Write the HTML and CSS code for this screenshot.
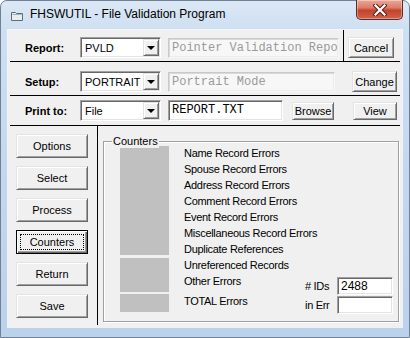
FILE: index.html
```html
<!DOCTYPE html>
<html lang="en">
<head>
    <meta charset="UTF-8">
    <title>FHSWUTIL - File Validation Program</title>
    <link rel="stylesheet" href="styles.css">
</head>
<body>
    <div class="window">
        <div class="titlebar">
            <svg class="app-icon" width="12" height="10" viewBox="0 0 12 10">
                <path d="M0.5 1.5 H4.5 L5.5 2.5 H11.5 V9.5 H0.5 Z" fill="#e6eef2" stroke="#5d6d78"/>
                <path d="M1.5 3.5 H10.5" stroke="#9fb2bd"/>
            </svg>
            <span class="title">FHSWUTIL - File Validation Program</span>
            <div class="close-btn">
                <svg width="14" height="12" viewBox="0 0 14 12">
                    <path d="M2.5 1.5 L11.5 10.5 M11.5 1.5 L2.5 10.5" stroke="#5a1e16" stroke-width="4.2" stroke-linecap="square"/>
                    <path d="M2.5 1.5 L11.5 10.5 M11.5 1.5 L2.5 10.5" stroke="#ffffff" stroke-width="2.2" stroke-linecap="square"/>
                </svg>
            </div>
        </div>

        <div class="client">
            <div class="top-rows">
                <div class="row row-report">
                    <span class="field-label">Report:</span>
                    <div class="combo"><span class="combo-text">PVLD</span><span class="combo-btn"><span class="arrow"></span></span></div>
                    <div class="textbox disabled tb-report">Pointer Validation Repo:</div>
                    <div class="divider"></div>
                    <button class="btn btn-cancel">Cancel</button>
                </div>
                <div class="row row-setup">
                    <span class="field-label">Setup:</span>
                    <div class="combo"><span class="combo-text">PORTRAIT</span><span class="combo-btn"><span class="arrow"></span></span></div>
                    <div class="textbox disabled tb-setup">Portrait Mode</div>
                    <button class="btn btn-change">Change</button>
                </div>
                <div class="row row-print">
                    <span class="field-label">Print to:</span>
                    <div class="combo"><span class="combo-text">File</span><span class="combo-btn"><span class="arrow"></span></span></div>
                    <div class="textbox tb-print">REPORT.TXT</div>
                    <button class="btn btn-browse">Browse</button>
                    <button class="btn btn-view">View</button>
                </div>
            </div>

            <div class="bottom">
                <div class="left-panel">
                    <button class="btn side-btn">Options</button>
                    <button class="btn side-btn">Select</button>
                    <button class="btn side-btn">Process</button>
                    <button class="btn side-btn default"><span class="focus">Counters</span></button>
                    <button class="btn side-btn">Return</button>
                    <button class="btn side-btn">Save</button>
                </div>

                <div class="group">
                    <span class="group-caption">Counters</span>
                    <div class="bars">
                        <div class="bar bar-1"></div>
                        <div class="bar bar-2"></div>
                        <div class="bar bar-3"></div>
                    </div>
                    <div class="labels">
                        <div>Name Record Errors</div>
                        <div>Spouse Record Errors</div>
                        <div>Address Record Errors</div>
                        <div>Comment Record Errors</div>
                        <div>Event Record Errors</div>
                        <div>Miscellaneous Record Errors</div>
                        <div>Duplicate References</div>
                        <div>Unreferenced Records</div>
                        <div>Other Errors</div>
                        <div class="total">TOTAL Errors</div>
                    </div>
                    <div class="ids">
                        <div class="id-row">
                            <span class="id-label"># IDs</span>
                            <div class="textbox id-box">2488</div>
                        </div>
                        <div class="id-row">
                            <span class="id-label">in Err</span>
                            <div class="textbox id-box"></div>
                        </div>
                    </div>
                </div>
            </div>
        </div>
    </div>
</body>
</html>
```

FILE: styles.css
```css
body {
    margin: 0;
    background: #ffffff;
}

.window {
    width: 410px;
    height: 338px;
    box-sizing: border-box;
    border: 1px solid #6f8197;
    border-radius: 7px 7px 0 0;
    padding: 0 7px 10px;
    background: linear-gradient(to bottom, #dce8f5 0, #cddff1 30px, #c2d6ec 60%, #bcd2ea 100%);
    font-family: "Liberation Sans", Arial, sans-serif;
    font-size: 11px;
    color: #000;
}

/* title bar */
.titlebar {
    height: 29px;
    display: flex;
    align-items: flex-start;
}

.app-icon {
    margin: 10px 0 0 3px;
}

.title {
    margin: 6px 0 0 7px;
    font-family: "Liberation Sans", Arial, sans-serif;
    font-size: 12px;
    line-height: 14px;
    color: #000;
}

.close-btn {
    margin: -1px -1px 0 auto;
    width: 47px;
    height: 20px;
    box-sizing: border-box;
    border: 1px solid #5e2a22;
    border-top: none;
    border-radius: 0 0 5px 5px;
    background: linear-gradient(to bottom, #e9a99b 0, #dc7d68 40%, #c3432c 55%, #d1624a 100%);
    box-shadow: inset 0 0 0 1px rgba(255,255,255,0.35);
    display: flex;
    align-items: center;
    justify-content: center;
}

/* client area */
.client {
    width: 394px;
    height: 297px;
    background: #f0f0f0;
    box-shadow: 0 0 0 1px rgba(255,255,255,0.7);
}

.top-rows {
    margin-left: 2px;
    width: 390px;
}

.row {
    display: flex;
    align-items: center;
    border-bottom: 1px solid #000;
}

.row-report {
    padding: 7px 0 3px;
}

.row-setup {
    padding: 9px 0 3px;
}

.row-print {
    padding: 4px 0 4px;
}

.field-label {
    flex: none;
    width: 55px;
    padding-left: 15px;
    font-weight: bold;
}

/* classic sunken controls */
.combo,
.textbox {
    flex: none;
    box-sizing: border-box;
    height: 21px;
    border: 1px solid;
    border-color: #a0a0a0 #ffffff #ffffff #a0a0a0;
    box-shadow: inset 1px 1px #696969, inset -1px -1px #e3e3e3;
    background: #fff;
}

.combo {
    width: 81px;
    display: flex;
    align-items: center;
    padding: 1px;
}

.combo-text {
    flex: 1;
    padding-left: 3px;
}

.combo-btn {
    width: 16px;
    height: 17px;
    box-sizing: border-box;
    background: #f0f0f0;
    border: 1px solid;
    border-color: #e3e3e3 #696969 #696969 #e3e3e3;
    box-shadow: inset 1px 1px #fff, inset -1px -1px #a0a0a0;
    display: flex;
    align-items: center;
    justify-content: center;
}

.arrow {
    width: 0;
    height: 0;
    border-left: 4px solid transparent;
    border-right: 4px solid transparent;
    border-top: 4px solid #000;
    margin-top: 1px;
}

.textbox {
    margin-left: 7px;
    padding: 0 3px;
    font-family: "Liberation Mono", "Courier New", monospace;
    font-size: 12px;
    line-height: 19px;
    white-space: nowrap;
    overflow: hidden;
}

.textbox.disabled {
    height: 20px;
    background: #f7f7f7;
    color: #9a9a9a;
    border-color: #c9c9c9 #f7f7f7 #f7f7f7 #c9c9c9;
    box-shadow: inset 1px 1px #d9d9d9, inset -1px -1px #ececec;
}

.tb-report {
    width: 171px;
}

.tb-setup {
    width: 167px;
}

.tb-print {
    width: 115px;
}

.divider {
    flex: none;
    align-self: stretch;
    width: 1px;
    background: #000;
    margin: -7px 0 -3px 4px;
}

/* classic raised button */
.btn {
    flex: none;
    box-sizing: border-box;
    height: 21px;
    padding: 0;
    background: #f0f0f0;
    border: 1px solid;
    border-color: #e3e3e3 #696969 #696969 #e3e3e3;
    box-shadow: inset 1px 1px #fff, inset -1px -1px #a0a0a0;
    font-family: "Liberation Sans", Arial, sans-serif;
    font-size: 11px;
    color: #000;
}

.btn-cancel {
    width: 46px;
    margin-left: 4px;
}

.btn-change {
    width: 45px;
    margin-left: 17px;
}

.btn-browse {
    width: 42px;
    height: 18px;
    margin-left: 9px;
}

.btn-view {
    width: 44px;
    height: 18px;
    margin-left: 19px;
}

/* lower part */
.bottom {
    display: flex;
    align-items: flex-start;
}

.left-panel {
    flex: none;
    width: 81px;
    height: 191px;
    padding: 8px 0 0 8px;
    border-right: 1px solid #000;
    display: flex;
    flex-direction: column;
    gap: 8px;
}

.side-btn {
    width: 72px;
    height: 24px;
}

.side-btn.default {
    border: 1px solid #000;
    box-shadow: inset 1px 1px #fff, inset -1px -1px #696969, inset -2px -2px #a0a0a0;
    padding: 3px;
}

.focus {
    display: block;
    height: 16px;
    line-height: 14px;
    box-sizing: border-box;
    border: 1px dotted #000;
}

.group {
    flex: none;
    position: relative;
    margin: 15px 0 0 5px;
    width: 278px;
    height: 175px;
    border: 1px solid #a0a0a0;
    box-shadow: inset 1px 1px #fff, 1px 1px #fff;
    padding: 4px 0 0 16px;
    display: flex;
    align-items: flex-start;
}

.group-caption {
    position: absolute;
    left: 8px;
    top: -7px;
    padding: 0 1px;
    line-height: 13px;
    background: #f0f0f0;
}

.bars {
    flex: none;
    width: 49px;
    display: flex;
    flex-direction: column;
}

.bar {
    background: #c0c0c0;
}

.bar-1 {
    height: 109px;
}

.bar-2 {
    height: 34px;
    margin-top: 3px;
}

.bar-3 {
    height: 18px;
    margin-top: 2px;
}

.labels {
    flex: none;
    width: 118px;
    margin: -1px 0 0 15px;
    line-height: 16px;
    letter-spacing: -0.3px;
    white-space: nowrap;
}

.labels .total {
    margin-top: 4px;
}

.ids {
    flex: none;
    margin: 131px 5px 0 auto;
    display: flex;
    flex-direction: column;
    gap: 1px;
}

.id-row {
    display: flex;
    align-items: center;
}

.id-label {
    width: 32px;
    letter-spacing: -0.3px;
}

.textbox.id-box {
    margin-left: 0;
    width: 56px;
    height: 18px;
    font-family: "Liberation Sans", Arial, sans-serif;
    font-size: 12px;
    line-height: 16px;
}
```
